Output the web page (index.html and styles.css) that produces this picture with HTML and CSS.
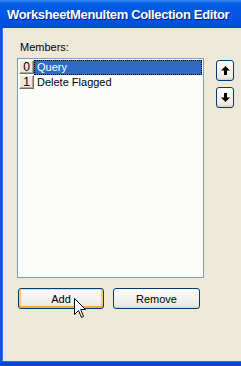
FILE: index.html
```html
<!DOCTYPE html>
<html>
<head>
<meta charset="utf-8">
<link rel="stylesheet" href="styles.css">
</head>
<body>
<div class="window">
  <div class="titlebar"><span class="title">WorksheetMenuItem Collection Editor</span></div>
  <div class="client">
    <div class="label">Members:</div>
    <div class="members">
      <div class="list">
        <div class="row">
          <div class="idx">0</div>
          <div class="text selected">Query</div>
        </div>
        <div class="row">
          <div class="idx">1</div>
          <div class="text">Delete Flagged</div>
        </div>
      </div>
      <div class="movers">
        <div class="btn small">
          <svg width="9" height="9" viewBox="0 0 9 9"><path d="M4.5 0 L9 4.5 L6 4.5 L6 9 L3 9 L3 4.5 L0 4.5 Z" fill="#000"/></svg>
        </div>
        <div class="btn small">
          <svg width="9" height="9" viewBox="0 0 9 9"><path d="M4.5 9 L9 4.5 L6 4.5 L6 0 L3 0 L3 4.5 L0 4.5 Z" fill="#000"/></svg>
        </div>
      </div>
    </div>
    <div class="actions">
      <div class="btn wide hover">Add</div>
      <div class="btn wide remove">Remove</div>
    </div>
    <svg class="cursor" width="13" height="21" viewBox="0 0 13 21"><path d="M0.5 0.5 L0.5 16.5 L4.5 12.5 L7.5 19.5 L9.5 18.5 L6.7 11.5 L11.5 11.5 Z" fill="#fff" stroke="#000" stroke-width="1" stroke-linejoin="miter"/></svg>
  </div>
</div>
</body>
</html>
```
FILE: styles.css
```css
html, body {
  margin: 0;
  padding: 0;
}
body {
  width: 241px;
  height: 366px;
  overflow: hidden;
  background: #ece9d8;
  font-family: "Liberation Sans", Arial, sans-serif;
  font-size: 11px;
  color: #000;
}
.window {
  width: 241px;
  height: 366px;
  display: flex;
  flex-direction: column;
}
.titlebar {
  height: 28px;
  flex: none;
  background: linear-gradient(#3d8cf7 0px, #0a63e6 3px, #0058e6 8px, #0054e3 20px, #0050d8 26px, #0048c8 28px);
  display: flex;
  align-items: center;
  padding-left: 7px;
  box-sizing: border-box;
}
.title {
  color: #fff;
  font-weight: bold;
  font-size: 13px;
  letter-spacing: -0.35px;
  text-shadow: 1px 1px 0 #0a1e6e;
  white-space: nowrap;
}
.client {
  flex: 1;
  position: relative;
  border-left: 2px solid #0a54e0;
  border-bottom: 4px solid #0a46d2;
  box-shadow: inset 1px 0 0 #3275ea, inset 0 -1px 0 #2a6ce6;
  padding: 12px 0 0 15px;
  box-sizing: border-box;
}
.label {
  height: 14px;
  line-height: 14px;
  padding-left: 3px;
  margin-bottom: 4px;
}
.members {
  display: flex;
  gap: 12px;
}
.list {
  width: 187px;
  height: 220px;
  box-sizing: border-box;
  border: 1px solid #7f9db9;
  background: #fcfdfa;
  padding: 1px 1px 0 1px;
}
.row {
  display: flex;
  height: 15px;
}
.idx {
  width: 15px;
  height: 14px;
  box-sizing: border-box;
  background: #ece9d8;
  border-top: 1px solid #fff;
  border-left: 1px solid #fff;
  border-right: 1px solid #716f64;
  border-bottom: 1px solid #716f64;
  box-shadow: inset -1px -1px 0 #aca899;
  text-align: center;
  line-height: 12px;
  font-size: 12px;
}
.text {
  flex: 1;
  height: 15px;
  line-height: 14px;
  padding-left: 3px;
  box-sizing: border-box;
}
.text.selected {
  background: #316ac5;
  color: #fff;
  outline: 1px dotted #000;
  outline-offset: -1px;
}
.movers {
  display: flex;
  flex-direction: column;
  gap: 6px;
  padding-top: 2px;
}
.btn {
  box-sizing: border-box;
  border: 1px solid #003c74;
  border-radius: 3px;
  background: linear-gradient(#ffffff 0%, #f4f4f0 40%, #ecebe6 85%, #d6d0c5 100%);
  display: flex;
  align-items: center;
  justify-content: center;
}
.btn.small {
  width: 18px;
  height: 21px;
}
.actions {
  display: flex;
  gap: 9px;
  margin-top: 10px;
  padding-left: 1px;
}
.btn.wide {
  width: 87px;
  height: 21px;
  font-size: 11px;
}
.btn.wide.hover {
  width: 86px;
  box-shadow: inset 0 1px 0 #ffdb8c, inset 0 -2px 0 #f5ae3d, inset 2px 0 0 #fbca6a, inset -2px 0 0 #fbca6a;
}
.cursor {
  position: absolute;
  left: 72px;
  top: 270px;
}
```
